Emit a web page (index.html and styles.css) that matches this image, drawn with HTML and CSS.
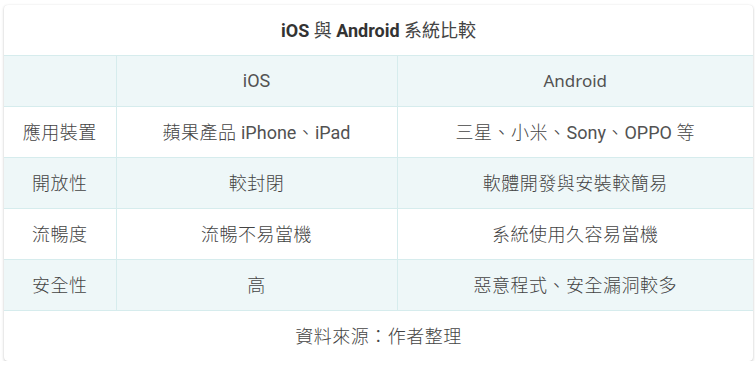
FILE: index.html
```html
<!DOCTYPE html>
<html lang="zh-Hant">
<head>
<meta charset="utf-8">
<link rel="stylesheet" href="styles.css">
</head>
<body>
<div class="card">
  <table class="cmp">
    <colgroup>
      <col class="c1">
      <col class="c2">
      <col class="c3">
    </colgroup>
    <thead>
      <tr class="title-row"><th colspan="3" class="title">iOS <span class="cjk">與</span> Android <span class="cjk">系統比較</span></th></tr>
      <tr class="tint"><th></th><th class="hd">iOS</th><th class="hd alt">Android</th></tr>
    </thead>
    <tbody>
      <tr><td><span class="cjk">應用裝置</span></td><td><span class="cjk">蘋果產品</span> iPhone<span class="cjk">、</span>iPad</td><td><span class="cjk">三星、小米、</span>Sony<span class="cjk">、</span>OPPO <span class="cjk">等</span></td></tr>
      <tr class="tint"><td><span class="cjk">開放性</span></td><td><span class="cjk">較封閉</span></td><td><span class="cjk">軟體開發與安裝較簡易</span></td></tr>
      <tr><td><span class="cjk">流暢度</span></td><td><span class="cjk">流暢不易當機</span></td><td><span class="cjk">系統使用久容易當機</span></td></tr>
      <tr class="tint"><td><span class="cjk">安全性</span></td><td><span class="cjk">高</span></td><td><span class="cjk">惡意程式、安全漏洞較多</span></td></tr>
    </tbody>
    <tfoot>
      <tr class="foot"><td colspan="3"><span class="cjk">資料來源：作者整理</span></td></tr>
    </tfoot>
  </table>
</div>
</body>
</html>
```

FILE: styles.css
```css
html, body {
  margin: 0;
  padding: 0;
  background: #ffffff;
}
body {
  font-family: Roboto, "Noto Sans CJK TC", sans-serif;
  color: #525252;
}
.card {
  margin: 5px 0 0 4px;
  width: 749px;
  background: #fff;
  border-radius: 4px;
  box-shadow: 0 1px 3px rgba(0,0,0,0.22), 0 0 1px rgba(0,0,0,0.08);
  overflow: hidden;
}
.cmp {
  width: 100%;
  border-collapse: collapse;
  table-layout: fixed;
}
.c1 { width: 112px; }
.c2 { width: 281px; }
.c3 { width: 356px; }
.cmp th, .cmp td {
  height: 50px;
  padding: 0;
  text-align: center;
  vertical-align: middle;
  font-size: 18px;
  font-weight: 400;
  border: 1px solid #d6eced;
  line-height: 1.2;
}
.cmp tr > :first-child { border-left: none; }
.cmp tr > :last-child { border-right: none; }
.title-row th {
  border-top: none;
  font-weight: 700;
  font-size: 18px;
  color: #333;
}
.cjk {
  font-family: "Noto Sans CJK TC", sans-serif;
  font-weight: 300;
  letter-spacing: 0.5px;
  color: #444;
}
.title .cjk {
  font-weight: 400;
  letter-spacing: 0;
}
.hd.alt {
  font-family: "Noto Sans", sans-serif;
  font-size: 17px;
}
.tint th, .tint td {
  background: #eef7f8;
}
.foot td {
  border-bottom: none;
}
```
